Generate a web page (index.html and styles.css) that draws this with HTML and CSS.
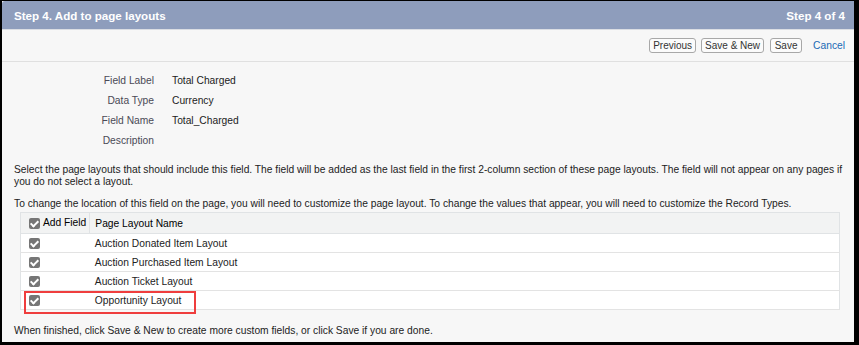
FILE: index.html
```html
<!DOCTYPE html>
<html lang="en">

<head>
    <meta charset="UTF-8">
    <title>New Custom Field - Step 4</title>
    <link rel="stylesheet" href="styles.css">
</head>

<body>
    <div class="frame">
        <!-- Step header -->
        <div class="step-header">
            <h2>Step 4. Add to page layouts</h2>
            <span class="step-count">Step 4 of 4</span>
        </div>

        <!-- Buttons -->
        <div class="button-bar">
            <button class="btn">Previous</button>
            <button class="btn">Save &amp; New</button>
            <button class="btn btn-save">Save</button>
            <a href="#" class="cancel-link">Cancel</a>
        </div>

        <!-- Field summary -->
        <div class="field-info">
            <div class="info-row"><span class="label">Field Label</span><span class="value">Total Charged</span></div>
            <div class="info-row"><span class="label">Data Type</span><span class="value">Currency</span></div>
            <div class="info-row"><span class="label">Field Name</span><span class="value">Total_Charged</span></div>
            <div class="info-row"><span class="label">Description</span><span class="value"></span></div>
        </div>

        <p class="help-text">Select the page layouts that should include this field. The field will be added as the last field in the first 2-column section of these page layouts. The field will not appear on any pages if you do not select a layout.</p>
        <p class="help-text">To change the location of this field on the page, you will need to customize the page layout. To change the values that appear, you will need to customize the Record Types.</p>

        <table class="layout-table">
            <thead>
                <tr>
                    <th class="col-check"><span class="checkbox"></span>Add Field</th>
                    <th>Page Layout Name</th>
                </tr>
            </thead>
            <tbody>
                <tr>
                    <td class="col-check"><span class="checkbox"></span></td>
                    <td>Auction Donated Item Layout</td>
                </tr>
                <tr>
                    <td class="col-check"><span class="checkbox"></span></td>
                    <td>Auction Purchased Item Layout</td>
                </tr>
                <tr>
                    <td class="col-check"><span class="checkbox"></span></td>
                    <td>Auction Ticket Layout</td>
                </tr>
                <tr class="highlight-row">
                    <td class="col-check"><span class="checkbox"></span><span class="highlight-box"></span></td>
                    <td>Opportunity Layout</td>
                </tr>
            </tbody>
        </table>

        <p class="footer-text">When finished, click Save &amp; New to create more custom fields, or click Save if you are done.</p>
    </div>
</body>

</html>
```

FILE: styles.css
```css
body {
    margin: 0;
    background-color: #000;
    font-family: Arial, "Liberation Sans", sans-serif;
    font-size: 10.25px;
    color: #222;
}

.frame {
    margin: 1px 5px 0 2px;
    height: 341px;
    background-color: #f7f7f7;
    overflow: hidden;
}

.step-header {
    display: flex;
    justify-content: space-between;
    align-items: center;
    height: 28px;
    padding: 0 9px 0 12px;
    background-color: #8e9dbc;
    border-bottom: 1px solid #dadde3;
    border-top-left-radius: 3px;
    color: white;
    font-weight: bold;
    font-size: 11.6px;
}

.step-header h2 {
    margin: 0;
    font-size: 11.6px;
}

.button-bar {
    display: flex;
    justify-content: flex-end;
    align-items: center;
    gap: 5px;
    height: 31px;
    padding-right: 9px;
    border-bottom: 1px solid #e0e0e0;
}

.btn {
    font-family: inherit;
    font-size: 10px;
    color: #333;
    background-color: #fbfbfb;
    border: 1px solid #a8a8a8;
    border-radius: 3px;
    padding: 0 3px;
    height: 15px;
    line-height: 13px;
}

.btn-save {
    min-width: 32px;
    margin-left: 1px;
}

.cancel-link {
    margin-left: 6px;
    color: #1a6ab5;
    text-decoration: none;
}

.field-info {
    padding-top: 8px;
}

.info-row {
    display: flex;
    height: 20px;
    align-items: center;
}

.info-row .label {
    width: 152px;
    text-align: right;
    color: #4a4a56;
}

.info-row .value {
    margin-left: 18px;
    color: #222;
}

.help-text {
    margin: 14px 8px 0 12px;
    line-height: 12px;
}

.help-text + .help-text {
    margin-top: 10px;
}

.layout-table {
    margin: 2px 0 0 18px;
    width: 820px;
    border-collapse: collapse;
    background-color: #fff;
    border: 1px solid #e0e3e5;
}

.layout-table th {
    background-color: #f2f3f3;
    text-align: left;
    font-weight: normal;
    color: #000;
    height: 20px;
    padding: 0 5px;
    white-space: nowrap;
    border-bottom: 1px solid #e0e3e5;
}

.layout-table th.col-check {
    border-right: 1px solid #e0e3e5;
}

.layout-table td {
    height: 18px;
    padding: 0 5px;
    border-bottom: 1px solid #e3e3e3;
    color: #222;
}

.layout-table .col-check {
    width: 57px;
    padding: 0 3px 0 8px;
}

.checkbox {
    display: inline-block;
    width: 11px;
    height: 11px;
    border-radius: 2px;
    background-color: #767676;
    vertical-align: middle;
    margin-right: 3px;
    position: relative;
}

.checkbox::after {
    content: "";
    position: absolute;
    left: 3px;
    top: 1px;
    width: 3px;
    height: 6px;
    border: solid #fff;
    border-width: 0 2px 2px 0;
    transform: rotate(45deg);
}

.highlight-row td:first-child {
    position: relative;
}

.highlight-box {
    position: absolute;
    left: 3px;
    top: 0;
    width: 168px;
    height: 19px;
    border: 2px solid #ef3e3e;
}

.footer-text {
    margin: 15px 12px 0 12px;
}
```
